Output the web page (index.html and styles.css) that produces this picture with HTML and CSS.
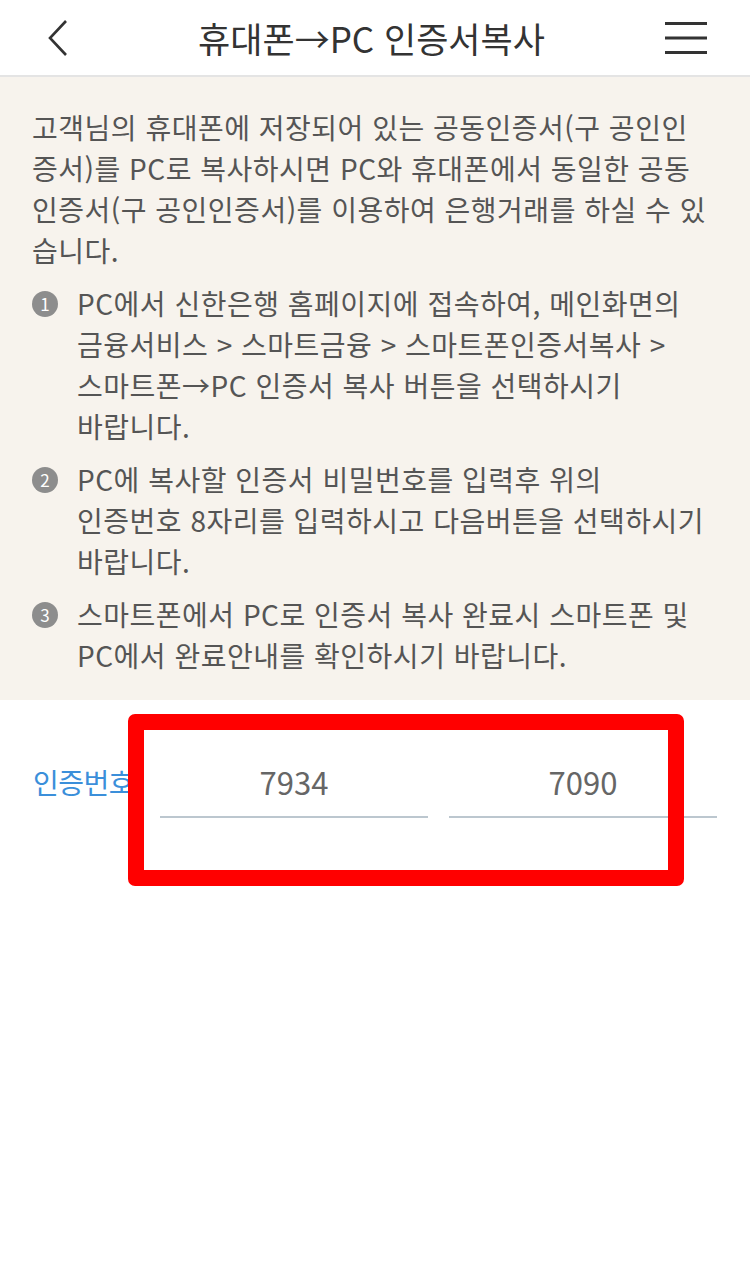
FILE: index.html
```html
<!DOCTYPE html>
<html lang="ko">
<head>
    <meta charset="UTF-8">
    <meta name="viewport" content="width=device-width, initial-scale=1.0">
    <title>휴대폰→PC 인증서복사</title>
    <link rel="stylesheet" href="styles.css">
</head>
<body>
    <header class="top-bar">
        <button class="icon-btn back" aria-label="뒤로">
            <svg width="24" height="38" viewBox="0 0 24 38"><path d="M20 2 L4 19 L20 36" fill="none" stroke="#333" stroke-width="2.6"/></svg>
        </button>
        <h1 class="title">휴대폰→PC 인증서복사</h1>
        <button class="icon-btn menu" aria-label="메뉴">
            <svg width="42" height="34" viewBox="0 0 42 34"><path d="M0 2.5 H42 M0 17 H42 M0 31.5 H42" stroke="#333" stroke-width="3"/></svg>
        </button>
    </header>

    <section class="guide">
        <p class="intro">고객님의 휴대폰에 저장되어 있는 공동인증서(구 공인인<br>증서)를 PC로 복사하시면 PC와 휴대폰에서 동일한 공동<br>인증서(구 공인인증서)를 이용하여 은행거래를 하실 수 있<br>습니다.</p>
        <ol class="steps">
            <li><span class="num">1</span><p>PC에서 신한은행 홈페이지에 접속하여, 메인화면의<br>금융서비스 &gt; 스마트금융 &gt; 스마트폰인증서복사 &gt;<br>스마트폰→PC 인증서 복사 버튼을 선택하시기<br>바랍니다.</p></li>
            <li><span class="num">2</span><p>PC에 복사할 인증서 비밀번호를 입력후 위의<br>인증번호 8자리를 입력하시고 다음버튼을 선택하시기<br>바랍니다.</p></li>
            <li><span class="num">3</span><p>스마트폰에서 PC로 인증서 복사 완료시 스마트폰 및<br>PC에서 완료안내를 확인하시기 바랍니다.</p></li>
        </ol>
    </section>

    <section class="code-row">
        <span class="label">인증번호</span>
        <input class="code" type="text" value="7934" readonly>
        <input class="code" type="text" value="7090" readonly>
        <div class="mark"></div>
    </section>
</body>
</html>
```

FILE: styles.css
```css
body {
    margin: 0;
    font-family: "Noto Sans CJK KR", "Noto Sans", sans-serif;
    background-color: #fff;
    color: #555;
}
.top-bar {
    height: 75px;
    border-bottom: 2px solid #e4e4e4;
    display: flex;
    align-items: center;
    justify-content: space-between;
    padding: 0 43px 0 46px;
}
.icon-btn {
    background: none;
    border: 0;
    padding: 0;
    display: flex;
}
.title {
    margin: 0;
    font-size: 35px;
    font-weight: 400;
    color: #333;
    letter-spacing: 0;
    padding-left: 8px;
}
.guide {
    background-color: #f7f3ed;
    padding: 30px 10px 24px 32px;
    font-size: 28px;
    line-height: 41px;
    letter-spacing: 0.5px;
}
.intro {
    margin: 0;
}
.steps {
    list-style: none;
    margin: 0;
    padding: 0;
}
.steps li {
    display: flex;
    margin-top: 12px;
}
.steps p {
    margin: 0;
    flex: 1;
    white-space: nowrap;
}
.num {
    flex-shrink: 0;
    width: 26px;
    height: 26px;
    margin: 8px 19px 0 0;
    border-radius: 50%;
    background-color: #8d8d8d;
    color: #fff;
    font-size: 17px;
    line-height: 26px;
    text-align: center;
    letter-spacing: 0;
}
.code-row {
    position: relative;
    display: flex;
    gap: 21px;
    align-items: center;
    padding: 46px 33px 80px 33px;
}
.label {
    width: 106px;
    flex-shrink: 0;
    white-space: nowrap;
    color: #3b8fda;
    font-size: 28px;
    letter-spacing: -0.5px;
}
.code {
    flex: 1;
    min-width: 0;
    height: 70px;
    border: 0;
    border-bottom: 2px solid #bcc7cf;
    background: transparent;
    font-family: inherit;
    font-size: 31px;
    color: #666;
    text-align: center;
    padding: 0;
    outline: none;
}
.mark {
    position: absolute;
    left: 128px;
    top: 14px;
    width: 524px;
    height: 140px;
    border: 16px solid #ff0000;
    border-radius: 7px;
}
```
